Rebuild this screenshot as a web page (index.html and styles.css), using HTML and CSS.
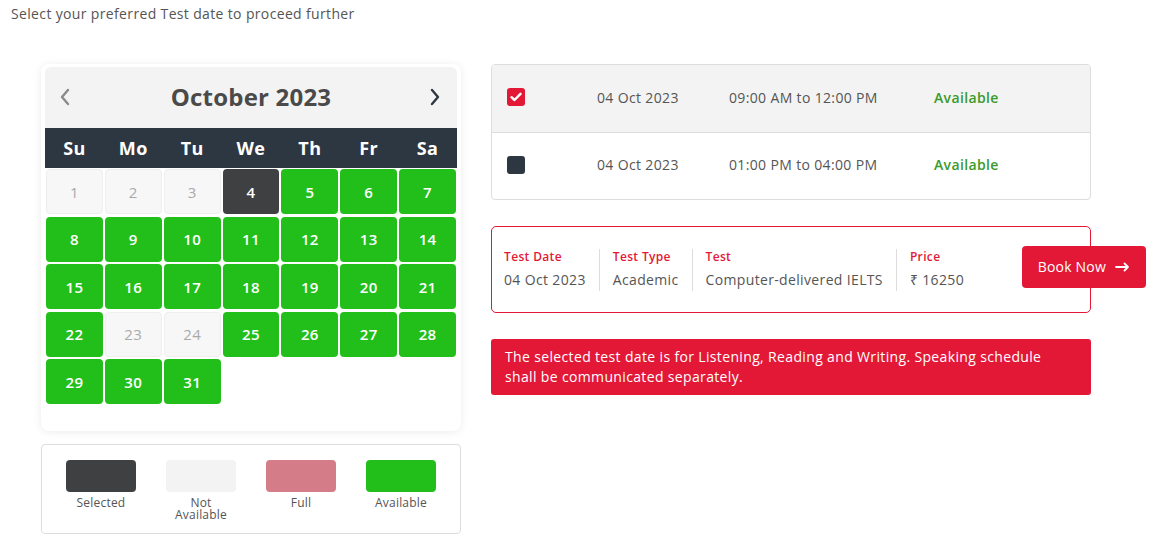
FILE: index.html
```html
<!DOCTYPE html>
<html lang="en">
<head>
    <meta charset="UTF-8">
    <meta name="viewport" content="width=device-width, initial-scale=1.0">
    <title>Select Test Date</title>
    <link rel="stylesheet" href="styles.css">
</head>
<body>
    <p class="intro">Select your preferred Test date to proceed further</p>

    <div class="booking">
        <!-- Left: calendar + legend -->
        <div class="left-col">
            <div class="calendar">
                <div class="cal-head">
                    <span class="nav prev">
                        <svg width="12" height="18" viewBox="0 0 12 18"><path d="M9 2 L3 9 L9 16" fill="none" stroke="#8a8a8a" stroke-width="2.4" stroke-linecap="round" stroke-linejoin="round"/></svg>
                    </span>
                    <span class="month">October 2023</span>
                    <span class="nav next">
                        <svg width="12" height="18" viewBox="0 0 12 18"><path d="M3 2 L9 9 L3 16" fill="none" stroke="#2d3741" stroke-width="2.4" stroke-linecap="round" stroke-linejoin="round"/></svg>
                    </span>
                </div>
                <div class="week">
                    <span>Su</span><span>Mo</span><span>Tu</span><span>We</span><span>Th</span><span>Fr</span><span>Sa</span>
                </div>
                <div class="days">
                    <span class="day na">1</span>
                    <span class="day na">2</span>
                    <span class="day na">3</span>
                    <span class="day sel">4</span>
                    <span class="day">5</span>
                    <span class="day">6</span>
                    <span class="day">7</span>
                    <span class="day">8</span>
                    <span class="day">9</span>
                    <span class="day">10</span>
                    <span class="day">11</span>
                    <span class="day">12</span>
                    <span class="day">13</span>
                    <span class="day">14</span>
                    <span class="day">15</span>
                    <span class="day">16</span>
                    <span class="day">17</span>
                    <span class="day">18</span>
                    <span class="day">19</span>
                    <span class="day">20</span>
                    <span class="day">21</span>
                    <span class="day">22</span>
                    <span class="day na">23</span>
                    <span class="day na">24</span>
                    <span class="day">25</span>
                    <span class="day">26</span>
                    <span class="day">27</span>
                    <span class="day">28</span>
                    <span class="day">29</span>
                    <span class="day">30</span>
                    <span class="day">31</span>
                </div>
            </div>

            <div class="legend">
                <div class="legend-item"><span class="swatch selected"></span><span class="legend-label">Selected</span></div>
                <div class="legend-item"><span class="swatch not-available"></span><span class="legend-label">Not Available</span></div>
                <div class="legend-item"><span class="swatch full"></span><span class="legend-label">Full</span></div>
                <div class="legend-item"><span class="swatch available"></span><span class="legend-label">Available</span></div>
            </div>
        </div>

        <!-- Right: slots, summary, notice -->
        <div class="right-col">
            <div class="slots">
                <div class="slot active">
                    <span class="check on">
                        <svg width="12" height="10" viewBox="0 0 12 10"><path d="M1.5 5.2 L4.5 8 L10.5 1.8" fill="none" stroke="#fff" stroke-width="2.4" stroke-linecap="round" stroke-linejoin="round"/></svg>
                    </span>
                    <span>04 Oct 2023</span>
                    <span>09:00 AM to 12:00 PM</span>
                    <span class="status">Available</span>
                </div>
                <div class="slot">
                    <span class="check"></span>
                    <span>04 Oct 2023</span>
                    <span>01:00 PM to 04:00 PM</span>
                    <span class="status">Available</span>
                </div>
            </div>

            <div class="summary">
                <div class="info">
                    <span class="info-label">Test Date</span>
                    <span class="info-value">04 Oct 2023</span>
                </div>
                <div class="info">
                    <span class="info-label">Test Type</span>
                    <span class="info-value">Academic</span>
                </div>
                <div class="info">
                    <span class="info-label">Test</span>
                    <span class="info-value">Computer-delivered IELTS</span>
                </div>
                <div class="info">
                    <span class="info-label">Price</span>
                    <span class="info-value">&#8377; 16250</span>
                </div>
                <button class="book-btn" type="button">Book Now
                    <svg width="15" height="10" viewBox="0 0 15 10"><path d="M1 5 H13 M9.5 1.5 L13 5 L9.5 8.5" fill="none" stroke="#fff" stroke-width="1.8" stroke-linecap="round" stroke-linejoin="round"/></svg>
                </button>
            </div>

            <div class="notice">
                The selected test date is for Listening, Reading and Writing. Speaking schedule shall be communicated separately.
            </div>
        </div>
    </div>
</body>
</html>
```

FILE: styles.css
```css
body {
    font-family: "Open Sans", "Liberation Sans", sans-serif;
    letter-spacing: 0.35px;
    margin: 0;
    padding: 0;
    background: #fff;
    color: #555;
}

.intro {
    margin: 0;
    padding: 4px 11px 0;
    font-size: 14px;
    line-height: 20px;
    color: #555;
}

.booking {
    display: flex;
    gap: 30px;
    padding-left: 41px;
    margin-top: 40px;
}

.left-col {
    width: 420px;
}

/* Calendar card */
.calendar {
    background: #fff;
    border-radius: 8px;
    box-shadow: 0 1px 8px rgba(0, 0, 0, 0.08);
    padding: 3px 4px 27px;
}

.cal-head {
    display: flex;
    align-items: center;
    justify-content: space-between;
    height: 61px;
    padding: 0 14px 2px;
    box-sizing: border-box;
    background: #f3f3f3;
    border-radius: 6px 6px 0 0;
}

.nav {
    display: flex;
    align-items: center;
    width: 14px;
}

.month {
    font-size: 24px;
    font-weight: 700;
    letter-spacing: 0.2px;
    color: #4a4a4a;
}

.week {
    display: grid;
    grid-template-columns: repeat(7, 1fr);
    height: 40px;
    align-items: center;
    background: #2d3741;
    color: #fff;
    font-size: 18px;
    font-weight: 700;
    text-align: center;
}

.days {
    display: grid;
    grid-template-columns: repeat(7, 1fr);
    grid-auto-rows: 45px;
    gap: 2.5px 2px;
    padding: 1px 1px 0;
}

.day {
    display: flex;
    align-items: center;
    justify-content: center;
    background: #22bf1b;
    color: #fff;
    border-radius: 4px;
    font-size: 15px;
    font-weight: 600;
}

.day.na {
    background: #f7f7f7;
    border: 1px solid #eee;
    color: #aaa;
    font-weight: 400;
}

.day.sel {
    background: #3f4042;
}

/* Legend */
.legend {
    display: grid;
    grid-template-columns: repeat(4, 100px);
    justify-content: center;
    margin-top: 13px;
    height: 90px;
    padding-top: 15px;
    box-sizing: border-box;
    border: 1px solid #ddd;
    border-radius: 4px;
}

.legend-item {
    display: flex;
    flex-direction: column;
    align-items: center;
}

.swatch {
    width: 70px;
    height: 32px;
    border-radius: 4px;
}

.swatch.selected { background: #3f4042; }
.swatch.not-available { background: #f3f3f3; }
.swatch.full { background: #d47c88; }
.swatch.available { background: #22bf1b; }

.legend-label {
    width: 70px;
    margin-top: 5px;
    font-size: 12px;
    line-height: 12px;
    letter-spacing: 0.2px;
    text-align: center;
    color: #555;
}

/* Right column */
.right-col {
    width: 600px;
}

.slots {
    border: 1px solid #ddd;
    border-radius: 4px;
    overflow: hidden;
}

.slot {
    display: grid;
    grid-template-columns: 90px 132px 205px 1fr;
    align-items: center;
    height: 67px;
    padding: 0 0 3px 15px;
    box-sizing: border-box;
    font-size: 14px;
    color: #555;
}

.slot + .slot {
    border-top: 1px solid #ddd;
}

.slot.active {
    background: #f3f3f3;
}

.check {
    display: flex;
    align-items: center;
    justify-content: center;
    width: 18px;
    height: 18px;
    border-radius: 3px;
    background: #2d3741;
}

.check.on {
    background: #e31837;
}

.status {
    color: #3a9a2a;
    font-weight: 600;
}

/* Summary */
.summary {
    display: flex;
    align-items: center;
    height: 87px;
    margin-top: 26px;
    padding-left: 12px;
    box-sizing: border-box;
    border: 1px solid #e31837;
    border-radius: 5px;
}

.info {
    display: flex;
    flex-direction: column;
    justify-content: center;
    height: 42px;
    padding: 0 13px;
    border-right: 1px solid #ddd;
}

.info:first-child {
    padding-left: 0;
}

.info:nth-child(4) {
    border-right: none;
}

.info-label {
    font-size: 12px;
    font-weight: 600;
    color: #e31837;
    line-height: 16px;
}

.info-value {
    margin-top: 4px;
    font-size: 14px;
    line-height: 22px;
    color: #555;
}

.book-btn {
    display: flex;
    align-items: center;
    gap: 9px;
    margin-left: auto;
    margin-right: -56px;
    margin-top: -6px;
    height: 42px;
    padding: 0 16px;
    border: none;
    border-radius: 4px;
    background: #e31837;
    color: #fff;
    font-family: inherit;
    font-size: 14px;
    letter-spacing: 0.2px;
    cursor: pointer;
}

.notice {
    margin-top: 26px;
    padding: 8px 30px 8px 14px;
    border-radius: 3px;
    background: #e31837;
    color: #fff;
    font-size: 14px;
    line-height: 20px;
}
```
